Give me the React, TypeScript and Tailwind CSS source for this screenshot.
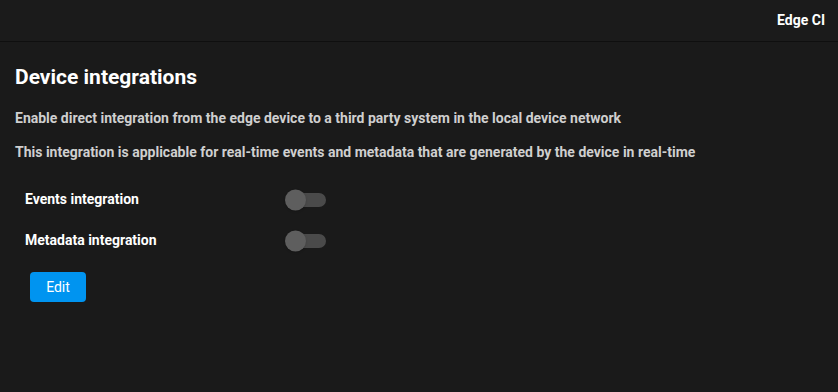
import { useState } from 'react'

function Toggle({ on, onChange }: { on: boolean; onChange: (v: boolean) => void }) {
  return (
    <button
      type="button"
      onClick={() => onChange(!on)}
      className="relative h-[14px] w-[37px] rounded-full bg-[#4a4a4a]"
    >
      <span
        className={`absolute top-1/2 h-[21px] w-[21px] -translate-y-1/2 rounded-full bg-[#5e5e5e] shadow ${
          on ? 'left-[20px]' : 'left-[-4px]'
        }`}
      />
    </button>
  )
}

export default function App() {
  const [events, setEvents] = useState(false)
  const [metadata, setMetadata] = useState(false)

  const rows = [
    { label: 'Events integration', on: events, set: setEvents },
    { label: 'Metadata integration', on: metadata, set: setMetadata },
  ]

  return (
    <div className="min-h-screen bg-[#1a1a1a] font-['Roboto',sans-serif] text-white">
      <header className="flex h-[42px] items-center justify-end border-b border-[#0f0f0f] bg-[#1b1b1b] px-[13px]">
        <span className="text-[14px] font-bold">Edge CI</span>
      </header>

      <main className="px-[15px] pt-[22px]">
        <h1 className="text-[21px] font-bold leading-[26px]">Device integrations</h1>

        <p className="mt-[19px] text-[14px] font-bold leading-[18px] text-[#cfcfcf]">
          Enable direct integration from the edge device to a third party system in the local device network
        </p>
        <p className="mt-[16px] text-[14px] font-bold leading-[18px] text-[#cfcfcf]">
          This integration is applicable for real-time events and metadata that are generated by the device in real-time
        </p>

        <div className="mt-[28px] flex flex-col gap-[20px] pl-[10px]">
          {rows.map((r) => (
            <div key={r.label} className="flex h-[21px] items-center">
              <span className="w-[264px] text-[14px] font-bold">{r.label}</span>
              <Toggle on={r.on} onChange={r.set} />
            </div>
          ))}
        </div>

        <button
          type="button"
          className="mt-[21px] ml-[15px] h-[30px] w-[56px] rounded-[4px] bg-[#0094f0] text-[14px] text-white"
        >
          Edit
        </button>
      </main>
    </div>
  )
}
